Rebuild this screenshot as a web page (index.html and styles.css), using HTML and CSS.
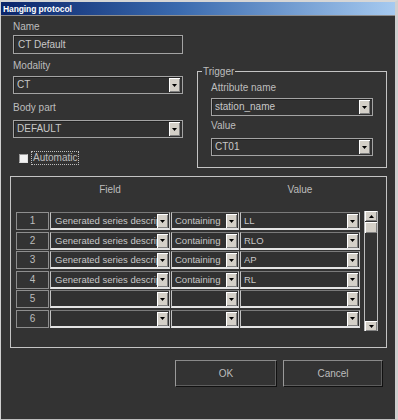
FILE: index.html
```html
<!DOCTYPE html>
<html>
<head>
<meta charset="utf-8">
<title>Hanging protocol</title>
<link rel="stylesheet" href="styles.css">
</head>
<body>
<div class="window">
  <div class="titlebar"><span class="title">Hanging protocol</span></div>
  <div class="content">
    <div class="top">
      <div class="leftcol">
        <div class="label l-name">Name</div>
        <div class="input">CT Default</div>
        <div class="label l-mod">Modality</div>
        <div class="combo c-mod"><span class="val">CT</span><span class="btn"><svg width="5" height="3" viewBox="0 0 5 3"><path d="M0 0H5L2.5 3Z" fill="#000"/></svg></span></div>
        <div class="label l-body">Body part</div>
        <div class="combo c-body"><span class="val">DEFAULT</span><span class="btn"><svg width="5" height="3" viewBox="0 0 5 3"><path d="M0 0H5L2.5 3Z" fill="#000"/></svg></span></div>
        <div class="check-row"><span class="checkbox"></span><span class="check-label">Automatic</span></div>
      </div>
      <div class="group trigger">
        <div class="group-title">Trigger</div>
        <div class="label l-attr">Attribute name</div>
        <div class="combo c-attr"><span class="val">station_name</span><span class="btn"><svg width="5" height="3" viewBox="0 0 5 3"><path d="M0 0H5L2.5 3Z" fill="#000"/></svg></span></div>
        <div class="label l-val">Value</div>
        <div class="combo c-val"><span class="val">CT01</span><span class="btn"><svg width="5" height="3" viewBox="0 0 5 3"><path d="M0 0H5L2.5 3Z" fill="#000"/></svg></span></div>
      </div>
    </div>
    <div class="group table-group">
      <div class="grid head">
        <span></span><span class="h">Field</span><span></span><span class="h">Value</span>
      </div>
      <div class="table-body">
        <div class="grid rows">
          <div class="num">1</div>
          <div class="tcombo"><span class="val">Generated series description</span><span class="btn"><svg width="5" height="3" viewBox="0 0 5 3"><path d="M0 0H5L2.5 3Z" fill="#000"/></svg></span></div>
          <div class="tcombo"><span class="val">Containing</span><span class="btn"><svg width="5" height="3" viewBox="0 0 5 3"><path d="M0 0H5L2.5 3Z" fill="#000"/></svg></span></div>
          <div class="tcombo"><span class="val">LL</span><span class="btn"><svg width="5" height="3" viewBox="0 0 5 3"><path d="M0 0H5L2.5 3Z" fill="#000"/></svg></span></div>

          <div class="num">2</div>
          <div class="tcombo"><span class="val">Generated series description</span><span class="btn"><svg width="5" height="3" viewBox="0 0 5 3"><path d="M0 0H5L2.5 3Z" fill="#000"/></svg></span></div>
          <div class="tcombo"><span class="val">Containing</span><span class="btn"><svg width="5" height="3" viewBox="0 0 5 3"><path d="M0 0H5L2.5 3Z" fill="#000"/></svg></span></div>
          <div class="tcombo"><span class="val">RLO</span><span class="btn"><svg width="5" height="3" viewBox="0 0 5 3"><path d="M0 0H5L2.5 3Z" fill="#000"/></svg></span></div>

          <div class="num">3</div>
          <div class="tcombo"><span class="val">Generated series description</span><span class="btn"><svg width="5" height="3" viewBox="0 0 5 3"><path d="M0 0H5L2.5 3Z" fill="#000"/></svg></span></div>
          <div class="tcombo"><span class="val">Containing</span><span class="btn"><svg width="5" height="3" viewBox="0 0 5 3"><path d="M0 0H5L2.5 3Z" fill="#000"/></svg></span></div>
          <div class="tcombo"><span class="val">AP</span><span class="btn"><svg width="5" height="3" viewBox="0 0 5 3"><path d="M0 0H5L2.5 3Z" fill="#000"/></svg></span></div>

          <div class="num">4</div>
          <div class="tcombo"><span class="val">Generated series description</span><span class="btn"><svg width="5" height="3" viewBox="0 0 5 3"><path d="M0 0H5L2.5 3Z" fill="#000"/></svg></span></div>
          <div class="tcombo"><span class="val">Containing</span><span class="btn"><svg width="5" height="3" viewBox="0 0 5 3"><path d="M0 0H5L2.5 3Z" fill="#000"/></svg></span></div>
          <div class="tcombo"><span class="val">RL</span><span class="btn"><svg width="5" height="3" viewBox="0 0 5 3"><path d="M0 0H5L2.5 3Z" fill="#000"/></svg></span></div>

          <div class="num">5</div>
          <div class="tcombo"><span class="val"></span><span class="btn"><svg width="5" height="3" viewBox="0 0 5 3"><path d="M0 0H5L2.5 3Z" fill="#000"/></svg></span></div>
          <div class="tcombo"><span class="val"></span><span class="btn"><svg width="5" height="3" viewBox="0 0 5 3"><path d="M0 0H5L2.5 3Z" fill="#000"/></svg></span></div>
          <div class="tcombo"><span class="val"></span><span class="btn"><svg width="5" height="3" viewBox="0 0 5 3"><path d="M0 0H5L2.5 3Z" fill="#000"/></svg></span></div>

          <div class="num">6</div>
          <div class="tcombo"><span class="val"></span><span class="btn"><svg width="5" height="3" viewBox="0 0 5 3"><path d="M0 0H5L2.5 3Z" fill="#000"/></svg></span></div>
          <div class="tcombo"><span class="val"></span><span class="btn"><svg width="5" height="3" viewBox="0 0 5 3"><path d="M0 0H5L2.5 3Z" fill="#000"/></svg></span></div>
          <div class="tcombo"><span class="val"></span><span class="btn"><svg width="5" height="3" viewBox="0 0 5 3"><path d="M0 0H5L2.5 3Z" fill="#000"/></svg></span></div>
        </div>
        <div class="scrollbar">
          <div class="sb-btn"><svg width="5" height="3" viewBox="0 0 5 3"><path d="M2.5 0L5 3H0Z" fill="#000"/></svg></div>
          <div class="sb-thumb"></div>
          <div class="sb-track"></div>
          <div class="sb-btn"><svg width="5" height="3" viewBox="0 0 5 3"><path d="M0 0H5L2.5 3Z" fill="#000"/></svg></div>
        </div>
      </div>
    </div>
    <div class="buttons">
      <div class="button ok">OK</div>
      <div class="button cancel">Cancel</div>
    </div>
  </div>
</div>
</body>
</html>
```

FILE: styles.css
```css
html, body {
  margin: 0;
  padding: 0;
  background: #333333;
}

body {
  font-family: "Liberation Sans", Arial, sans-serif;
  font-size: 10px;
  color: #bdbdbd;
}

.window {
  width: 398px;
  height: 420px;
  box-sizing: border-box;
  border-top: 2px solid #d6d6d6;
  border-left: 1px solid #cfcfcf;
  border-right: 3px solid #cfcfcf;
  border-bottom: 1px solid #c0c0c0;
  background: #333333;
  overflow: hidden;
}

.titlebar {
  height: 13px;
  background: linear-gradient(to right, #0a246a 0%, #3a6aae 45%, #a6caf0 100%);
  border-bottom: 1px solid #8c8c8c;
  display: flex;
  align-items: center;
  padding-left: 2px;
}

.title {
  color: #ffffff;
  font-weight: bold;
  font-size: 8.5px;
  line-height: 10px;
  letter-spacing: -0.1px;
}

.content {
  padding-left: 9px;
}

.top {
  display: flex;
}

.leftcol {
  width: 170px;
  margin-left: 3px;
}

.label {
  height: 12px;
  line-height: 12px;
  white-space: nowrap;
}

.l-name { margin-top: 5px; }
.l-mod { margin-top: 6px; }
.l-body { margin-top: 8px; }

.input {
  height: 19px;
  margin-top: 2px;
  box-sizing: border-box;
  border: 1px solid #a4a4a4;
  box-shadow: inset 1px 1px 0 #222222;
  background: #313131;
  color: #c8c8c8;
  line-height: 17px;
  padding-left: 4px;
}

.combo {
  height: 18px;
  box-sizing: border-box;
  border: 1px solid #a4a4a4;
  box-shadow: inset 1px 1px 0 #222222;
  background: #313131;
  display: flex;
  align-items: stretch;
  padding: 1px 2px 1px 3px;
  color: #c8c8c8;
}

.combo .val,
.tcombo .val {
  flex: 1;
  min-width: 0;
  overflow: hidden;
  white-space: nowrap;
  line-height: 14px;
}

.tcombo .val {
  font-size: 9.5px;
}

.combo .btn,
.tcombo .btn {
  width: 11px;
  flex: none;
  background: #d4d0c8;
  box-shadow: inset 1px 1px 0 #ffffff, inset -1px -1px 0 #808080;
  display: flex;
  align-items: center;
  justify-content: center;
}

.c-mod { margin-top: 4px; }
.c-body { margin-top: 6px; }

.check-row {
  margin-top: 13px;
  height: 14px;
  display: flex;
  align-items: center;
  padding-left: 6px;
}

.checkbox {
  width: 9px;
  height: 9px;
  box-sizing: border-box;
  background: #f2f2f2;
  border: 1px solid #9a9a9a;
  border-right-color: #e0e0e0;
  border-bottom-color: #e0e0e0;
}

.check-label {
  margin-left: 3px;
  border: 1px dotted #bdbdbd;
  padding: 0 1px;
  line-height: 12px;
}

.group {
  border: 1px solid #c4c4c4;
  box-sizing: border-box;
}

.trigger {
  width: 190px;
  margin-left: 14px;
  margin-top: 55px;
  padding: 0 13px 11px 13px;
}

.group-title {
  width: max-content;
  margin: -6px 0 0 -9px;
  padding: 0 1px;
  background: #333333;
  line-height: 12px;
  height: 12px;
}

.l-attr { margin-top: 4px; }
.c-attr { margin-top: 4px; }
.l-val { margin-top: 4px; }
.c-val { margin-top: 6px; }

.table-group {
  width: 377px;
  margin-top: 8px;
  padding: 7px 8px 16px 5px;
}

.grid {
  display: grid;
  grid-template-columns: 33px 120px 68px 120px;
  column-gap: 1px;
}

.head {
  height: 12px;
  line-height: 12px;
  margin-bottom: 16px;
}

.head .h {
  text-align: center;
}

.table-body {
  display: flex;
  align-items: flex-start;
}

.rows {
  grid-auto-rows: 18px;
  row-gap: 1.6px;
}

.num {
  box-sizing: border-box;
  border: 1px solid #8e8e8e;
  text-align: center;
  line-height: 16px;
}

.tcombo {
  box-sizing: border-box;
  border-top: 1px solid #7a7a7a;
  border-left: 1px solid #c4c4c4;
  border-right: 1px solid #c8c8c8;
  border-bottom: 2px solid #e4e4e4;
  background: #313131;
  display: flex;
  align-items: stretch;
  padding: 1px 1px 0 3px;
  color: #c8c8c8;
}

.rows .tcombo:nth-child(4n+2) {
  padding-left: 4px;
}

.scrollbar {
  width: 14px;
  height: 120px;
  margin-top: -1px;
  margin-left: 4px;
  box-sizing: border-box;
  border-left: 1px solid #bdbdbd;
  border-right: 1px solid #bdbdbd;
  display: flex;
  flex-direction: column;
}

.sb-btn {
  height: 10px;
  background: #d4d0c8;
  box-shadow: inset 1px 1px 0 #ffffff, inset -1px -1px 0 #808080;
  display: flex;
  align-items: center;
  justify-content: center;
}

.sb-thumb {
  height: 11px;
  margin-top: 1px;
  background: #d4d0c8;
  box-shadow: inset 1px 1px 0 #ffffff, inset -1px -1px 0 #808080;
}

.sb-track {
  flex: 1;
}

.buttons {
  display: flex;
  justify-content: flex-end;
  gap: 6px;
  margin-top: 12px;
  padding-right: 12px;
}

.button {
  height: 27px;
  box-sizing: border-box;
  border-top: 1px solid #8a8a8a;
  border-left: 1px solid #9a9a9a;
  border-right: 1px solid #111111;
  border-bottom: 1px solid #111111;
  box-shadow: inset -1px -1px 0 #5e5e5e;
  background: #333333;
  color: #bdbdbd;
  text-align: center;
  line-height: 25px;
}

.ok { width: 102px; }
.cancel { width: 100px; }
```
